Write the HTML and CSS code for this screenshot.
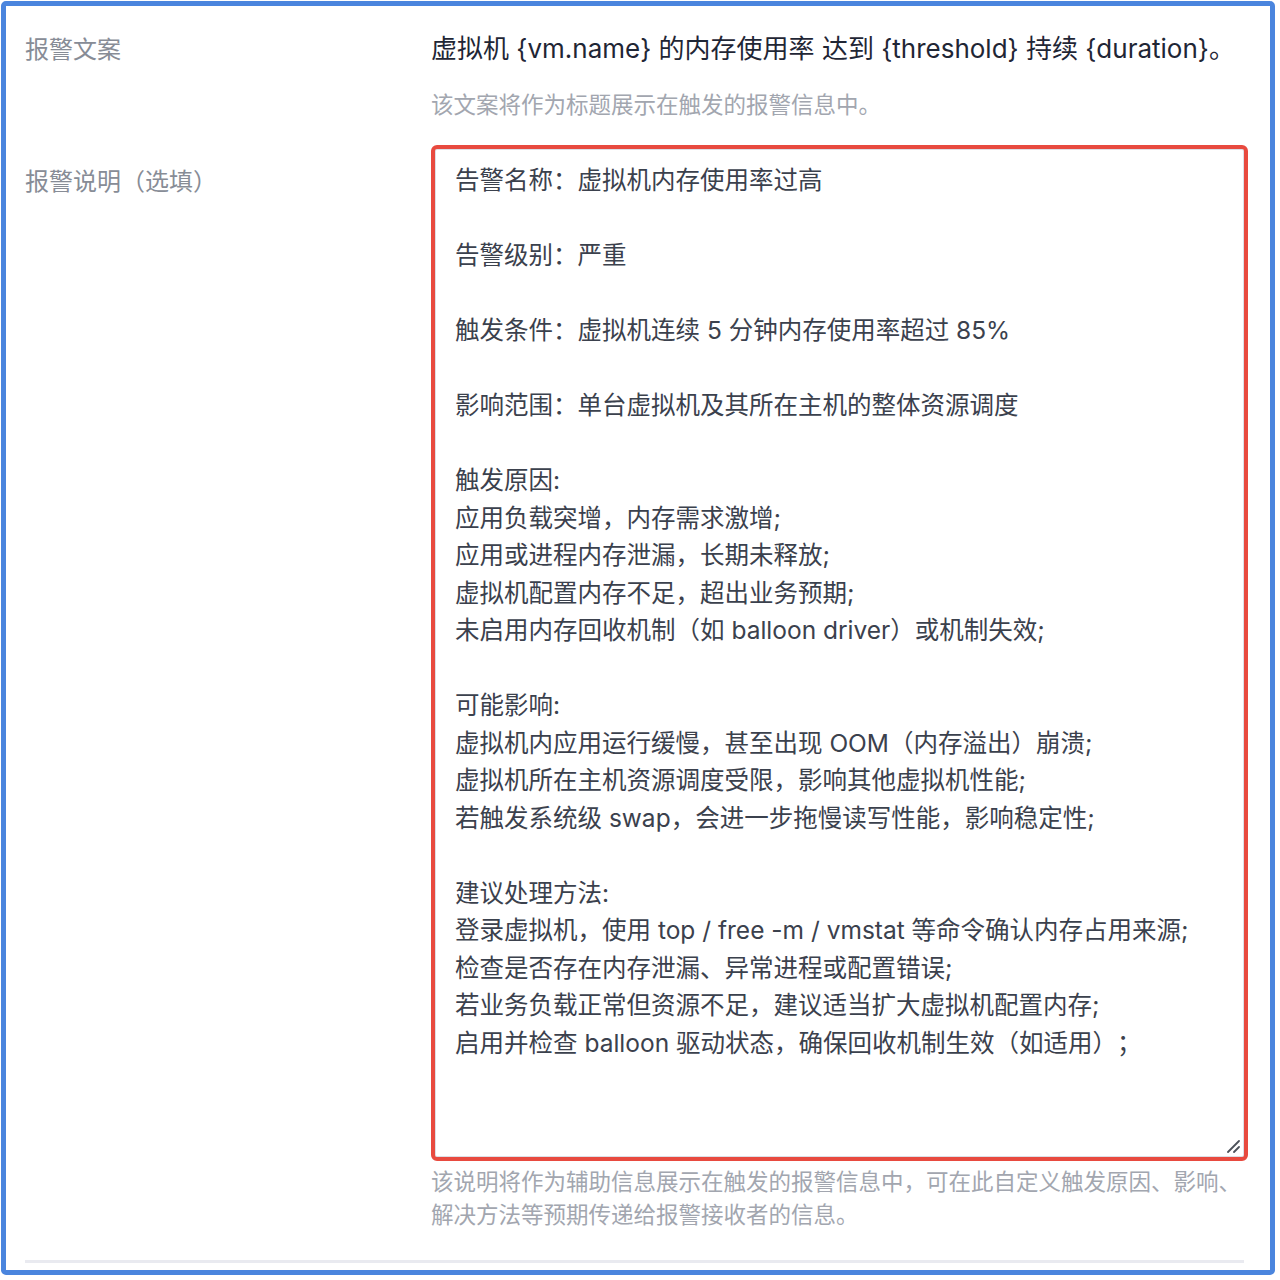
FILE: index.html
```html
<!DOCTYPE html>
<html lang="zh-CN">
<head>
    <meta charset="UTF-8">
    <meta name="viewport" content="width=device-width, initial-scale=1.0">
    <title>报警配置</title>
    <link rel="stylesheet" href="styles.css">
</head>
<body>
    <div class="frame">
        <div class="form-row">
            <div class="form-label label-first">报警文案</div>
            <div class="form-field">
                <div class="title-text">虚拟机 {vm.name} 的内存使用率 达到 {threshold} 持续 {duration}。</div>
                <div class="hint hint-title">该文案将作为标题展示在触发的报警信息中。</div>
            </div>
        </div>

        <div class="form-row row-desc">
            <div class="form-label label-desc">报警说明（选填）</div>
            <div class="form-field">
                <div class="textarea-box">
                    <div class="textarea-text">告警名称：虚拟机内存使用率过高

告警级别：严重

触发条件：虚拟机连续 5 分钟内存使用率超过 85%

影响范围：单台虚拟机及其所在主机的整体资源调度

触发原因:
应用负载突增，内存需求激增;
应用或进程内存泄漏，长期未释放;
虚拟机配置内存不足，超出业务预期;
未启用内存回收机制（如 balloon driver）或机制失效;

可能影响:
虚拟机内应用运行缓慢，甚至出现 OOM（内存溢出）崩溃;
虚拟机所在主机资源调度受限，影响其他虚拟机性能;
若触发系统级 swap，会进一步拖慢读写性能，影响稳定性;

建议处理方法:
登录虚拟机，使用 top / free -m / vmstat 等命令确认内存占用来源;
检查是否存在内存泄漏、异常进程或配置错误;
若业务负载正常但资源不足，建议适当扩大虚拟机配置内存;
启用并检查 balloon 驱动状态，确保回收机制生效（如适用）；</div>
                    <svg class="grip" width="14" height="14" viewBox="0 0 14 14">
                        <path d="M13 2 L2 13 M13 8 L8 13" stroke="#4d525b" stroke-width="1.8" stroke-linecap="round"/>
                    </svg>
                </div>
                <div class="hint hint-desc">该说明将作为辅助信息展示在触发的报警信息中，可在此自定义触发原因、影响、解决方法等预期传递给报警接收者的信息。</div>
            </div>
        </div>

        <div class="divider"></div>
    </div>
</body>
</html>
```

FILE: styles.css
```css
* {
    margin: 0;
    padding: 0;
    box-sizing: border-box;
}

body {
    background: #fff;
    font-family: Inter, "Noto Sans CJK SC", sans-serif;
    text-spacing-trim: space-all;
}

.frame {
    width: 1274px;
    height: 1274px;
    margin: 1px;
    border: 5px solid #4a85de;
    border-radius: 5px;
    background: #fff;
    padding: 25px 22px 0 19px;
}

.form-row {
    display: grid;
    grid-template-columns: 406px 1fr;
}

.row-desc {
    margin-top: 24px;
}

.form-label {
    font-size: 24px;
    line-height: 36px;
    color: #878c96;
}

.label-first {
    margin-top: 1px;
}

.label-desc {
    margin-top: 19px;
}

.title-text {
    font-size: 26px;
    line-height: 36px;
    color: #1f2635;
    white-space: nowrap;
}

.hint {
    font-size: 22.5px;
    line-height: 33px;
    color: #a2a6af;
}

.hint-title {
    margin-top: 21px;
}

.hint-desc {
    margin-top: 4px;
}

.textarea-box {
    position: relative;
    height: 1016px;
    border: 4px solid #e84a3f;
    border-radius: 6px;
    box-shadow: inset 0 0 0 1px #dcdfe6;
    padding: 13px 20px;
}

.textarea-text {
    white-space: pre-wrap;
    font-size: 24.5px;
    line-height: 37.5px;
    color: #3b414d;
}

.grip {
    position: absolute;
    right: 4px;
    bottom: 4px;
}

.divider {
    margin-top: 29px;
    height: 3px;
    background: #e9eaf0;
    margin-right: 4px;
}
```
